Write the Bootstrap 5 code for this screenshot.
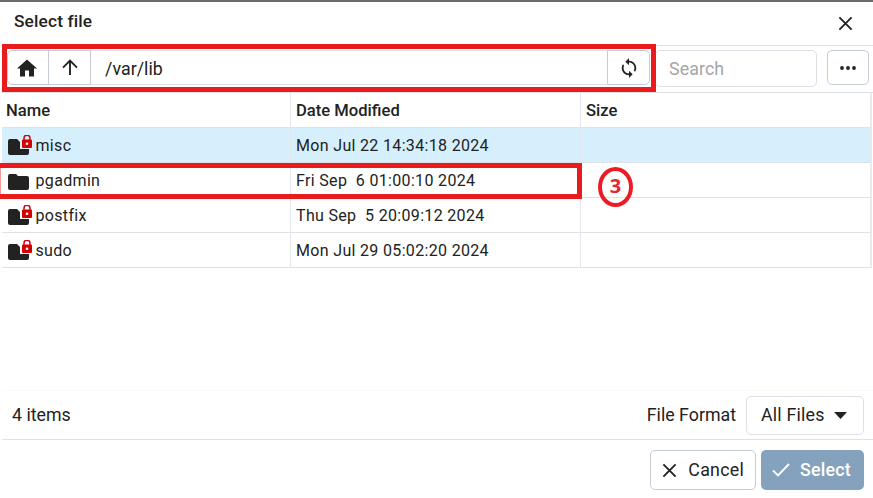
<!DOCTYPE html>
<html lang="en">
<head>
<meta charset="utf-8">
<meta name="viewport" content="width=device-width, initial-scale=1">
<title>Select file</title>
<link href="https://cdn.jsdelivr.net/npm/bootstrap@5.3.0/dist/css/bootstrap.min.css" rel="stylesheet">
<style>
body{font-family:Roboto,"Liberation Sans",sans-serif;font-size:16px;line-height:24px;color:#222;background:#fff;overflow:hidden}
svg{display:block;flex:none}
.dialog{height:498px;border-top:2px solid #686b70;padding-left:2px}
.line-b{border-bottom:1px solid #dfe1e7}
.head{height:44px;padding:0 20px 5px 12px}
.head h1{font-size:17.3px;font-weight:500;line-height:24px;letter-spacing:.15px}
.tools{height:47px;padding:4px 3px 0 5px}
.tool{height:35px;border:1px solid #c5cbd9;background:#fff;color:#222;padding:0;display:flex;align-items:center;justify-content:center}
.path-box{flex:1;height:35px;border:solid #dee0e7;border-width:1px 0;padding:0 14px;line-height:36px;font-size:17.8px;letter-spacing:.05px}
.addr{width:643px}
.home{width:42px;padding-right:2px;border-radius:5px 0 0 5px}
.up{width:43px;margin-left:-1px}
.refresh{width:43px;border-radius:0 5px 5px 0}
.search{width:162px;height:37px;margin-left:5px;border:1px solid #dee0e7;border-radius:5px;padding:0 13px;font-size:17.8px;line-height:34px;letter-spacing:.1px;color:#222}
.search::placeholder{color:#a5a6a8;opacity:1}
.more{width:42px;border-radius:5px;margin-left:10px}
.files{width:870px;border-right:2px solid #e9eaf0}
.files .file-row{display:grid;grid-template-columns:289px 290px 1fr;height:35px;border-bottom:1px solid #dfe1e7}
.file-row>div{padding:0 0 0 5px;line-height:35px;white-space:pre;display:flex;align-items:center;letter-spacing:.33px}
.file-row>div:not(:last-child){border-right:1px solid #e4e6ec}
.file-row.titles>div{font-weight:500;font-size:16.6px;letter-spacing:0}
.file-row.titles>div:first-child{padding-left:4px}
.file-row.selected{background:#d6effc}
.files .file-row>.name-cell{padding-left:6px}
.name-cell svg{margin-right:2.5px}
.foot{height:50px;border-top:1px solid #fafafa;padding:0 9px 0 10px;font-size:17.8px}
.foot .fmt-label{margin-left:auto;margin-right:10px}
.fmt{width:118px;height:39px;border:1px solid #dee0e7;border-radius:5px;background:#fff;color:#222;font-size:17.8px;letter-spacing:.2px;padding:0 16px 0 14px}
.actions{padding:10px 9px 8px 0;gap:5px}
.act{height:40px;border-radius:5px;padding:0 12px 0 11px;font-size:17.8px;line-height:24px;color:#222;letter-spacing:.25px}
.cancel{width:106px;border:1px solid #c5cbd9;padding-right:11px}
.ok{width:103px;background:#84a2bd!important;color:#fff!important;border:0;font-weight:500;padding-right:13px}
.callout{position:absolute;border:5px solid #e81c1c;pointer-events:none}
.callout-path{left:2px;top:44px;width:654px;height:48px}
.callout-row{left:-5px;top:163px;width:587px;height:36px;box-shadow:inset 1px 0 #f49a9a}
.step{position:absolute;left:598px;top:167px;width:35px;height:40px;border:4px solid #ed1c24;border-radius:50%;color:#e02b35;font:700 20px/30px "Open Sans",sans-serif;text-align:center}
</style>
<script src="https://cdn.jsdelivr.net/npm/bootstrap@5.3.0/dist/js/bootstrap.bundle.min.js"></script>
</head>
<body>
<svg width="0" height="0" class="position-absolute">
<symbol id="locked" viewBox="0 0 25 22"><path fill="#222" d="M2 4h7l3 3v7h9v4q0 2-2 2H2q-2 0-2-2V6q0-2 2-2z"/><path fill="none" stroke="#d0021b" stroke-width="1.500" d="M16 5V3.200a3 3 0 0 1 6 0V5"/><rect x="14" y="4.500" width="10" height="8.500" rx="1" fill="#d40000"/><circle cx="19" cy="8.700" r="1.300" fill="#fff"/></symbol>
<symbol id="close" viewBox="0 0 16 16"><path stroke="#222" stroke-width="2" d="M1.500 1.500l13 13M14.500 1.500l-13 13"/></symbol>
</svg>
<main class="dialog d-flex flex-column">
 <header class="head line-b d-flex align-items-center justify-content-between">
  <h1 class="m-0">Select file</h1>
  <button class="btn p-0 border-0 mt-1" aria-label="Close"><svg width="15" height="15"><use href="#close"/></svg></button>
 </header>
 <div class="tools line-b d-flex">
  <div class="addr d-flex">
   <button class="tool home" aria-label="Home"><svg width="20" height="18" viewBox="0 0 20 18"><path fill="#222" d="M8 17.500v-6h4v6h5v-8h3L10 .5 0 9.500h3v8z"/></svg></button>
   <button class="tool up" aria-label="Up"><svg width="16" height="17" viewBox="0 0 16 17"><path fill="none" stroke="#222" stroke-width="1.900" d="M8 16V2M1 8.700L8 1.700l7 7"/></svg></button>
   <div class="path-box">/var/lib</div>
   <button class="tool refresh" aria-label="Refresh"><svg width="20" height="20" viewBox="1 1 22 22"><path fill="#222" d="M12 4V1L8 5l4 4V6c3.310 0 6 2.690 6 6 0 1.010-.25 1.970-.7 2.800l1.460 1.460C19.540 15.030 20 13.570 20 12c0-4.420-3.580-8-8-8zm0 14c-3.310 0-6-2.690-6-6 0-1.010.25-1.970.7-2.800L5.240 7.740C4.460 8.970 4 10.430 4 12c0 4.420 3.580 8 8 8v3l4-4-4-4v3z"/></svg></button>
  </div>
  <input class="search" placeholder="Search" aria-label="Search">
  <button class="tool more" aria-label="Options"><svg width="16" height="4" viewBox="0 0 16 4"><g fill="#222"><circle cx="2" cy="2" r="1.900"/><circle cx="8" cy="2" r="1.900"/><circle cx="14" cy="2" r="1.900"/></g></svg></button>
 </div>
 <section class="files">
  <div class="file-row titles"><div>Name</div><div>Date Modified</div><div>Size</div></div>
  <div class="file-row selected"><div class="name-cell"><svg width="25" height="22"><use href="#locked"/></svg>misc</div><div>Mon Jul 22 14:34:18 2024</div><div></div></div>
  <div class="file-row"><div class="name-cell"><svg width="25" height="22" viewBox="0 0 25 22"><path fill="#222" d="M2 4h6l2 2h9q2 0 2 2v10q0 2-2 2H2q-2 0-2-2V6q0-2 2-2z"/></svg>pgadmin</div><div>Fri Sep  6 01:00:10 2024</div><div></div></div>
  <div class="file-row"><div class="name-cell"><svg width="25" height="22"><use href="#locked"/></svg>postfix</div><div>Thu Sep  5 20:09:12 2024</div><div></div></div>
  <div class="file-row"><div class="name-cell"><svg width="25" height="22"><use href="#locked"/></svg>sudo</div><div>Mon Jul 29 05:02:20 2024</div><div></div></div>
 </section>
 <div class="flex-grow-1"></div>
 <div class="foot line-b d-flex align-items-center">
  <span>4 items</span><span class="fmt-label">File Format</span>
  <button class="fmt d-flex align-items-center justify-content-between">All Files<svg width="13" height="7" viewBox="0 0 13 7"><path fill="#222" d="M0 0h13L6.500 7z"/></svg></button>
 </div>
 <footer class="actions d-flex justify-content-end">
  <button class="btn act cancel d-flex align-items-center justify-content-between"><svg width="15" height="15"><use href="#close"/></svg>Cancel</button>
  <button class="btn act ok d-flex align-items-center justify-content-between"><svg width="18" height="14" viewBox="0 0 18 14"><path fill="none" stroke="#fff" stroke-width="1.900" d="M1 7.500l5 5L17 1"/></svg>Select</button>
 </footer>
</main>
<div class="callout callout-path"></div>
<div class="callout callout-row"></div>
<div class="step">3</div>
</body>
</html>
